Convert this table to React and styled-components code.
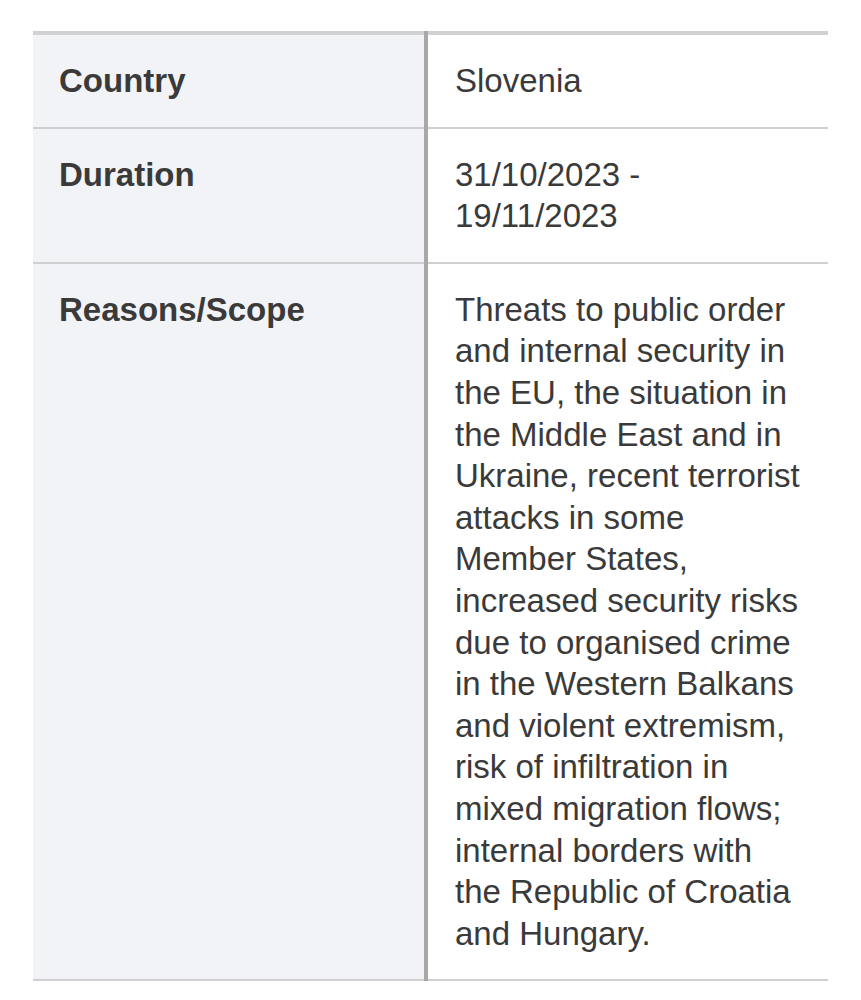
import styled, { createGlobalStyle } from "styled-components";

const GlobalStyle = createGlobalStyle`
  body {
    margin: 0;
    background: #ffffff;
    font-family: "Liberation Sans", Arial, sans-serif;
  }
`;

const Page = styled.div`
  padding: 31px 33px 0 33px;
`;

const Table = styled.table`
  width: 795px;
  border-collapse: collapse;
  border-top: 4px solid #d1d1d4;
  font-size: 33px;
  line-height: 41.6px;
  color: #3a3a3a;
`;

const Row = styled.tr`
  border-bottom: 2px solid #d0d0d2;
`;

const Label = styled.th`
  width: 393px;
  box-sizing: border-box;
  padding: 25px 26px;
  background: #f2f3f7;
  border-right: 4px solid #a8a8a8;
  text-align: left;
  vertical-align: top;
  font-weight: 700;
`;

const Value = styled.td`
  padding: 25px 26px 25px 27px;
  text-align: left;
  vertical-align: top;
  font-weight: 400;
`;

const rows = [
  { label: "Country", value: "Slovenia" },
  { label: "Duration", value: "31/10/2023 - 19/11/2023" },
  {
    label: "Reasons/Scope",
    value:
      "Threats to public order and internal security in the EU, the situation in the Middle East and in Ukraine, recent terrorist attacks in some Member States, increased security risks due to organised crime in the Western Balkans and violent extremism, risk of infiltration in mixed migration flows; internal borders with the Republic of Croatia and Hungary.",
  },
];

const App = () => {
  return (
    <>
      <GlobalStyle />
      <Page>
        <Table>
          <tbody>
            {rows.map((r) => (
              <Row key={r.label}>
                <Label>{r.label}</Label>
                <Value>{r.value}</Value>
              </Row>
            ))}
          </tbody>
        </Table>
      </Page>
    </>
  );
};

export default App;
